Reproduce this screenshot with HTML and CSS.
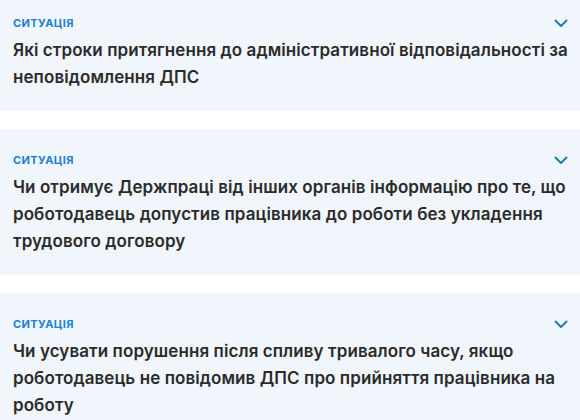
FILE: index.html
```html
<!DOCTYPE html>
<html lang="uk">
<head>
    <meta charset="UTF-8">
    <meta name="viewport" content="width=device-width, initial-scale=1.0">
    <title>Ситуації</title>
    <link rel="stylesheet" href="styles.css">
</head>
<body>
    <div class="situation-list">
        <div class="situation-card">
            <span class="situation-label">Ситуація</span>
            <svg class="situation-toggle" width="14" height="9" viewBox="0 0 14 9"><path d="M1.5 1.5 L7 7 L12.5 1.5" fill="none" stroke="currentColor" stroke-width="2" stroke-linecap="round" stroke-linejoin="round"/></svg>
            <h3 class="situation-title">Які строки притягнення до адміністративної відповідальності за неповідомлення ДПС</h3>
        </div>
        <div class="situation-card">
            <span class="situation-label">Ситуація</span>
            <svg class="situation-toggle" width="14" height="9" viewBox="0 0 14 9"><path d="M1.5 1.5 L7 7 L12.5 1.5" fill="none" stroke="currentColor" stroke-width="2" stroke-linecap="round" stroke-linejoin="round"/></svg>
            <h3 class="situation-title">Чи отримує Держпраці від інших органів інформацію про те, що роботодавець допустив працівника до роботи без укладення трудового договору</h3>
        </div>
        <div class="situation-card">
            <span class="situation-label">Ситуація</span>
            <svg class="situation-toggle" width="14" height="9" viewBox="0 0 14 9"><path d="M1.5 1.5 L7 7 L12.5 1.5" fill="none" stroke="currentColor" stroke-width="2" stroke-linecap="round" stroke-linejoin="round"/></svg>
            <h3 class="situation-title">Чи усувати порушення після спливу тривалого часу, якщо роботодавець не повідомив ДПС про прийняття працівника на роботу</h3>
        </div>
    </div>
</body>
</html>
```

FILE: styles.css
```css
body {
    font-family: 'Inter', 'Noto Sans', sans-serif;
    background-color: #ffffff;
    color: #2b2b2b;
    margin: 0;
    padding: 0;
    overflow: hidden;
}

.situation-list {
    display: flex;
    flex-direction: column;
    gap: 18px;
    margin-top: -8px;
}

.situation-card {
    position: relative;
    background-color: #f1f6fc;
    padding: 23px 6px 20px 13px;
}

.situation-label {
    display: block;
    font-size: 11px;
    line-height: 16px;
    font-weight: 700;
    letter-spacing: 0.4px;
    text-transform: uppercase;
    color: #1b80d6;
}

.situation-toggle {
    position: absolute;
    top: 27px;
    right: 12px;
    color: #1f7fa9;
}

.situation-title {
    margin: 6px 0 0 0;
    font-size: 17px;
    line-height: 27px;
    font-weight: 600;
    letter-spacing: 0.08px;
    color: #2b2b2b;
}
```
